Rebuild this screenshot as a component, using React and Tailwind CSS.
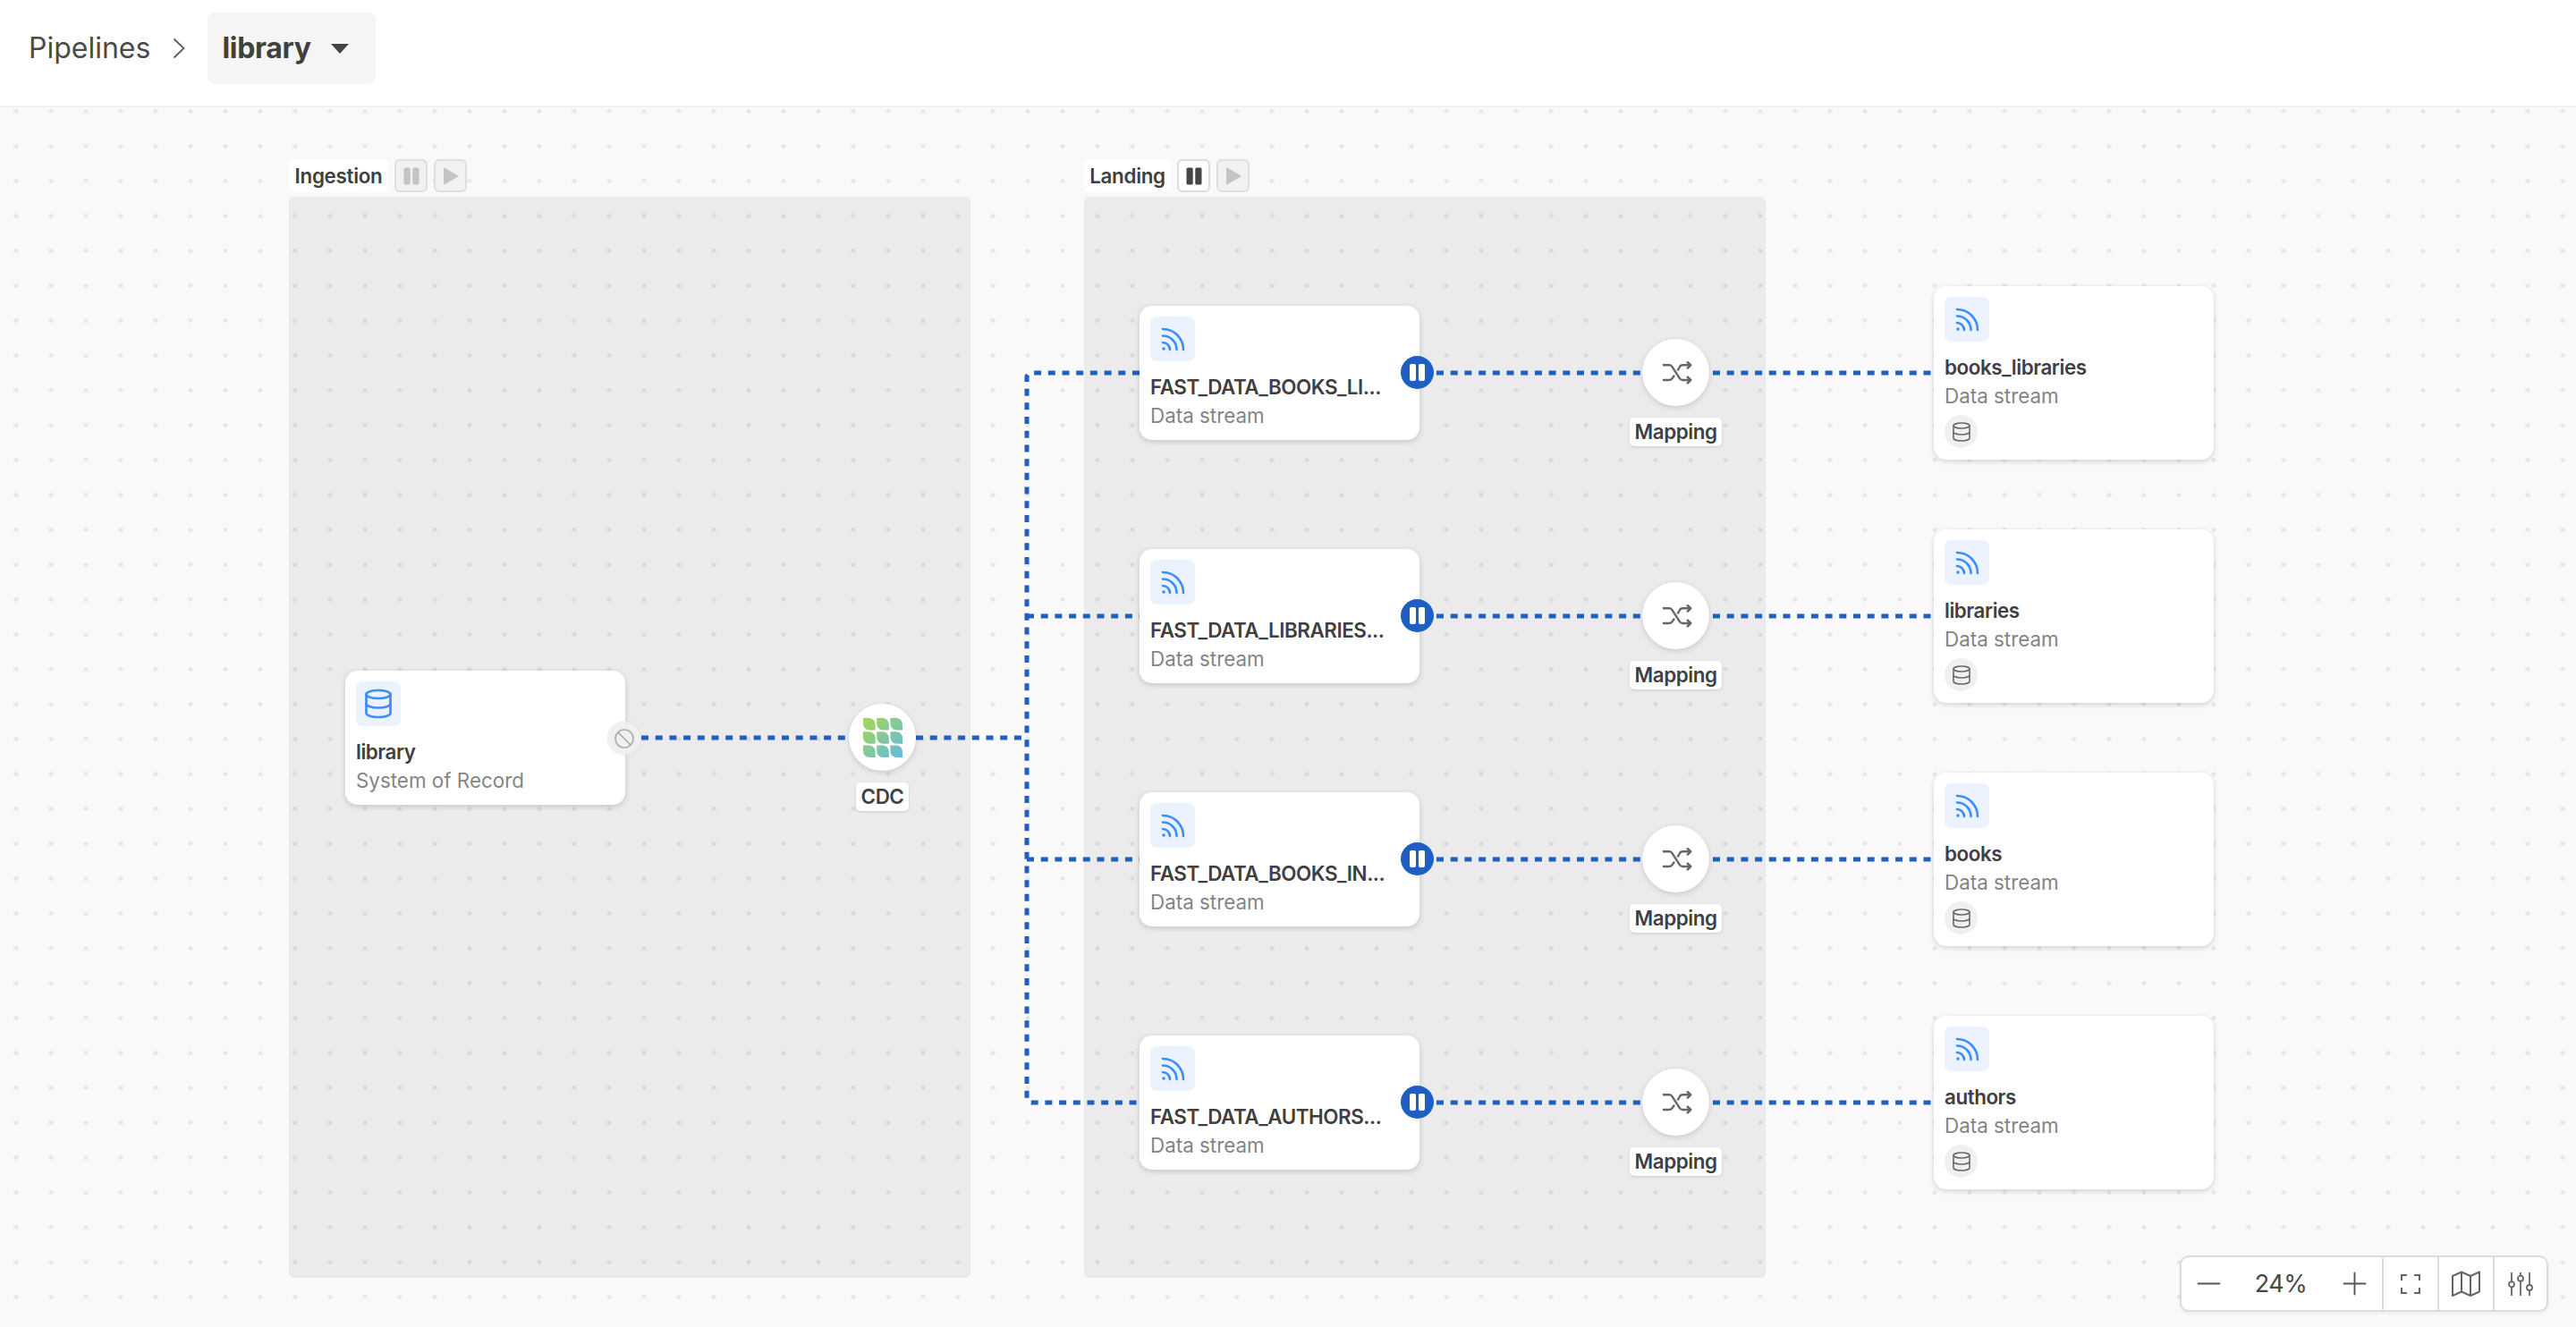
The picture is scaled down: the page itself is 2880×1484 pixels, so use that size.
import React from "react";
import { Database, Ban, Minus, Plus } from "lucide-react";

const BLUE = "#1f5fc4";

function Stream({ className = "w-7 h-7" }) {
  return (
    <svg viewBox="0 0 28 28" className={className} fill="none" stroke="#3b8eff" strokeWidth="2.6" strokeLinecap="round">
      <path d="M3 3a23 23 0 0 1 23 23" />
      <path d="M3 10.5a15.5 15.5 0 0 1 15.5 15.5" />
      <path d="M3 18a8 8 0 0 1 8 8" />
      <circle cx="4" cy="25" r="1.8" fill="#3b8eff" stroke="none" />
    </svg>
  );
}

function Shuffle() {
  return (
    <svg viewBox="0 0 36 28" className="h-7 w-9" fill="none" stroke="#666666" strokeWidth="2.4" strokeLinejoin="round">
      <path d="M3 5.300h7c1.500 0 2.600.6 3.500 1.800l8 12.500c1 1.600 2 2.400 3.500 2.400h9" />
      <path d="M3 22h7c1.500 0 2.600-.6 3.500-1.800l2.500-3.500" />
      <path d="M19.500 11.500l2-3.500c1-1.800 2-2.700 3.500-2.700h9" />
      <path d="M30 1.300l4.300 4-4.300 4" />
      <path d="M30 18l4.300 4-4.300 4" />
    </svg>
  );
}

function CdcLogo() {
  const tiles = [];
  for (let r = 0; r < 3; r++) {
    for (let c = 0; c < 3; c++) {
      const x = c * 15.2;
      const y = r * 15.2;
      tiles.push(<path key={`${r}-${c}`} d={`M${x} ${y}h6.600a7 7 0 0 1 7 7v6.600h-6.600a7 7 0 0 1-7-7z`} fill="url(#cdc)" />);
    }
  }
  return (
    <svg viewBox="0 0 44 44" className="h-[44px] w-[44px]">
      <defs>
        <linearGradient id="cdc" gradientUnits="userSpaceOnUse" x1="0" y1="0" x2="44" y2="44">
          <stop offset="0" stopColor="#a8d84f" />
          <stop offset="0.5" stopColor="#84c89a" />
          <stop offset="1" stopColor="#60bbe6" />
        </linearGradient>
      </defs>
      {tiles}
    </svg>
  );
}

function Card({ left, top, title, subtitle, icon, tall, handle }) {
  return (
    <div
      className={`absolute w-[313px] rounded-[14px] bg-white p-3 shadow-[0_2px_6px_rgba(0,0,0,0.16)] ${tall ? "h-[194px]" : "h-[150px]"}`}
      style={{ left, top }}
    >
      <div className="flex h-[50px] w-[50px] items-center justify-center rounded-lg bg-[#ebf2fe]">{icon}</div>
      <div className="mt-[14px] truncate text-[22.400px] leading-[30px] font-semibold tracking-[-0.45px] text-[#404040]">{title}</div>
      <div className="mt-[2px] text-[22.400px] leading-[30px] text-[#858585]">{subtitle}</div>
      {tall && (
        <div className="mt-[6px] flex h-[37px] w-[37px] items-center justify-center rounded-full bg-[#f0f0f0]">
          <Database className="h-[24px] w-[24px] text-[#6a6a6a]" strokeWidth={1.600} />
        </div>
      )}
      {handle}
    </div>
  );
}

function Round({ left, top, label, children }) {
  return (
    <div className="absolute flex w-[75px] flex-col items-center" style={{ left, top }}>
      <div className="flex h-[75px] w-[75px] items-center justify-center rounded-full bg-white shadow-[0_2px_6px_rgba(0,0,0,0.14)]">
        {children}
      </div>
      <div className="mt-[13px] rounded-[5px] bg-white px-[6px] text-[22.400px] leading-[32px] font-semibold tracking-[-0.45px] whitespace-nowrap text-[#404040] shadow-[0_1px_3px_rgba(0,0,0,0.14)]">
        {label}
      </div>
    </div>
  );
}

function GroupHeader({ left, label, active, width }) {
  return (
    <div className="absolute top-[58px] flex h-[37px] items-center gap-[7px]" style={{ left }}>
      <div className="flex h-[37px] items-center justify-center rounded-md bg-white text-[22.400px] font-semibold tracking-[-0.3px] text-[#404040]" style={{ width }}>
        {label}
      </div>
      <div className={`flex h-[37px] w-[37px] items-center justify-center rounded-md border-2 ${active ? "border-[#dcdcdc] bg-white" : "border-[#dedede] bg-[#f1f1f1]"}`}>
        <svg viewBox="0 0 20 20" className="h-[20px] w-[20px]" fill={active ? "#454545" : "#c4c4c4"}>
          <rect x="1.500" y="0.500" width="7.200" height="19" rx="1.500" />
          <rect x="11.300" y="0.500" width="7.200" height="19" rx="1.500" />
        </svg>
      </div>
      <div className="flex h-[37px] w-[37px] items-center justify-center rounded-md border-2 border-[#dedede] bg-[#f1f1f1]">
        <svg viewBox="0 0 20 20" className="h-[20px] w-[20px]" fill="#c4c4c4">
          <path d="M2 1.500v17a.8.8 0 0 0 1.200.7L18 10.700a.8.8 0 0 0 0-1.400L3.200.8A.8.8 0 0 0 2 1.500z" />
        </svg>
      </div>
    </div>
  );
}

function PauseHandle() {
  return (
    <div className="absolute top-[56px] right-[-16px] flex h-[37px] w-[37px] items-center justify-center gap-[3px] rounded-full bg-[#1f5fc4]">
      <div className="h-[19px] w-[7px] rounded-[2px] bg-white" />
      <div className="h-[19px] w-[7px] rounded-[2px] bg-white" />
    </div>
  );
}

function ToolBtn({ className, children }) {
  return <div className={`flex h-full shrink-0 items-center justify-center ${className}`}>{children}</div>;
}

export default function App() {
  const rows = [0, 272, 544, 816];
  const names = ["FAST_DATA_BOOKS_LI...", "FAST_DATA_LIBRARIES...", "FAST_DATA_BOOKS_IN...", "FAST_DATA_AUTHORS..."];
  const outs = ["books_libraries", "libraries", "books", "authors"];
  return (
    <div className="flex h-[1484px] w-[2880px] flex-col overflow-hidden bg-white font-['Inter',sans-serif]">
      <header className="flex h-[118px] shrink-0 items-center bg-white pb-[10px] pl-[32px]">
        <span className="text-[32px] text-[#4a4a4a]">Pipelines</span>
        <svg viewBox="0 0 14 24" className="ml-[25px] h-[24px] w-[14px]" fill="none" stroke="#5c5c5c" strokeWidth="1.800">
          <path d="M1.500 1.500 12.500 12 1.500 22.500" />
        </svg>
        <div className="ml-[25px] flex h-[80px] w-[188px] items-center rounded-lg bg-[#f5f5f5] pl-[16px]">
          <span className="text-[32px] font-bold tracking-[-0.3px] text-[#404040]">library</span>
          <svg viewBox="0 0 20 11" className="ml-[22px] h-[11px] w-[20px]" fill="#454545">
            <path d="M0 0h20L10 11z" />
          </svg>
        </div>
      </header>
      <main className="relative flex-1 border-t-2 border-[#f1f1f3] bg-[#f9f9f9] bg-[radial-gradient(circle,#e6e6e6_2px,transparent_2.600px)] bg-size-[39px_39px] bg-position-[-1.500px_-15px]">
        <div className="absolute top-[100px] left-[323px] h-[1209px] w-[762px] rounded-md border border-[#e8e8e8] bg-black/[0.055]" />
        <div className="absolute top-[100px] left-[1212px] h-[1209px] w-[762px] rounded-md border border-[#e8e8e8] bg-black/[0.055]" />
        <GroupHeader left={323} label="Ingestion" width={111} />
        <GroupHeader left={1212} label="Landing" active width={97} />

        <svg className="absolute top-0 left-0 h-[1364px] w-[2880px]" fill="none" stroke={BLUE} strokeWidth="5">
          <path d="M717 705H945" strokeDasharray="8 7.700" />
          <path d="M1024 705H1148" strokeDasharray="8 7.700" />
          <path d="M1274 297H1153a5 5 0 0 0-5 5V1108a5 5 0 0 0 5 5H1274" strokeDasharray="8 7.700" />
          <path d="M1148 569H1274" strokeDasharray="8 7.700" />
          <path d="M1148 841H1274" strokeDasharray="8 7.700" />
          {rows.map((r) => (
            <g key={r}>
              <path d={`M1606 ${297 + r}H1835`} strokeDasharray="8 7.700" />
              <path d={`M1915 ${297 + r}H2162`} strokeDasharray="8 7.700" />
            </g>
          ))}
        </svg>

        <Card
          left={386}
          top={630}
          title="library"
          subtitle="System of Record"
          icon={<Database className="h-[36px] w-[36px] text-[#3b8eff]" strokeWidth={1.800} />}
          handle={
            <div className="absolute top-[57px] right-[-17px] flex h-[37px] w-[37px] items-center justify-center rounded-full bg-[#f0f0f0] shadow-[0_0_2px_rgba(0,0,0,0.1)]">
              <Ban className="h-[24px] w-[24px] text-[#aeaeae]" strokeWidth={1.600} />
            </div>
          }
        />
        <Round left={949} top={667} label="CDC">
          <CdcLogo />
        </Round>

        {rows.map((r, i) => (
          <React.Fragment key={r}>
            <Card left={1274} top={222 + r} title={names[i]} subtitle="Data stream" icon={<Stream />} handle={<PauseHandle />} />
            <Round left={1836} top={259 + r} label="Mapping">
              <Shuffle />
            </Round>
            <Card left={2162} top={200 + r} title={outs[i]} subtitle="Data stream" icon={<Stream />} tall />
          </React.Fragment>
        ))}

        <div className="absolute top-[1284px] left-[2437px] flex h-[63px] w-[412px] items-center rounded-[10px] border-2 border-[#dcdcdc] bg-white text-[#555555] shadow-[0_2px_4px_rgba(0,0,0,0.05)]">
          <ToolBtn className="w-[60px]">
            <Minus className="h-[41px] w-[41px]" strokeWidth={1.100} />
          </ToolBtn>
          <ToolBtn className="w-[102px]">
            <span className="pt-[2px] text-[27px] tracking-[-0.5px] text-[#484848]">24%</span>
          </ToolBtn>
          <ToolBtn className="w-[62px]">
            <Plus className="h-[41px] w-[41px]" strokeWidth={1.100} />
          </ToolBtn>
          <ToolBtn className="w-[62px] border-l-2 border-[#dcdcdc]">
            <svg viewBox="0 0 22 22" className="h-[22px] w-[22px]" fill="none" stroke="#666666" strokeWidth="2.200">
              <path d="M1 7V1h6M15 1h6v6M21 15v6h-6M7 21H1v-6" />
            </svg>
          </ToolBtn>
          <ToolBtn className="w-[62px] border-l-2 border-[#dcdcdc]">
            <svg viewBox="0 0 32 29" className="h-[29px] w-[32px]" fill="none" stroke="#666666" strokeWidth="2" strokeLinejoin="round">
              <path d="M1 6 11 1.500 21 6 31 1.500V23.500L21 28 11 23.500 1 28Z" />
              <path d="M11 1.500V23.500M21 6V28" />
            </svg>
          </ToolBtn>
          <ToolBtn className="w-[60px] border-l-2 border-[#dcdcdc]">
            <svg viewBox="0 0 28 28" className="h-[28px] w-[28px]" fill="none" stroke="#666666" strokeWidth="1.800">
              <path d="M4 1v10M4 17.500V27M14 1v3.500M14 11V27M24 1v13.500M24 21v6" />
              <circle cx="4" cy="14.300" r="3" />
              <circle cx="14" cy="7.700" r="3" />
              <circle cx="24" cy="18" r="3" />
            </svg>
          </ToolBtn>
        </div>
      </main>
    </div>
  );
}
